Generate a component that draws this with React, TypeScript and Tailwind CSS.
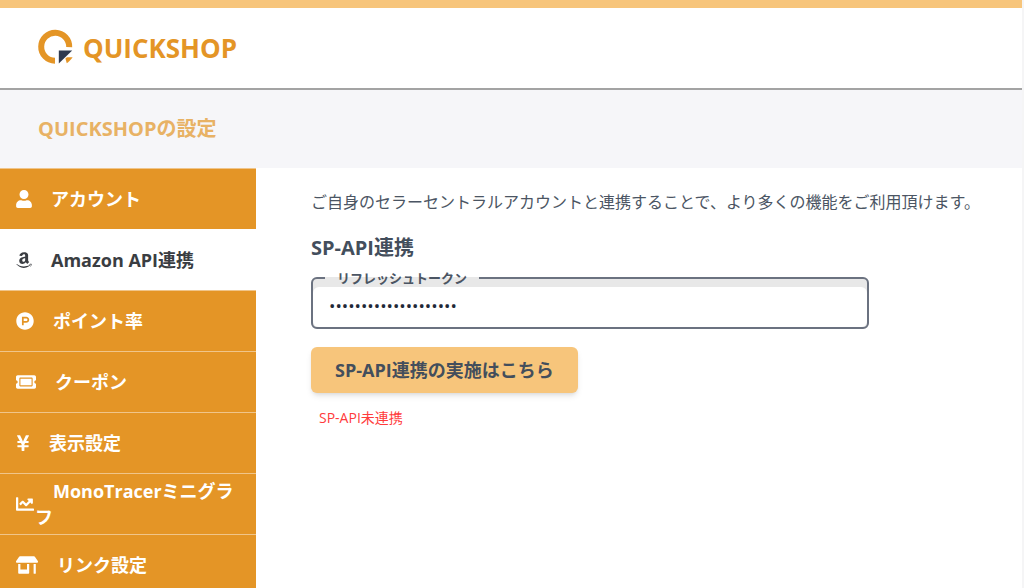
import React, { useState } from 'react';
import { FaUser, FaAmazon, FaProductHunt, FaTicketAlt, FaYenSign, FaChartLine, FaStoreAlt } from 'react-icons/fa';
import { IconType } from 'react-icons';

interface MenuItem {
    id: string;
    label: string;
    icon: IconType;
    width: string;
}

const menuItems: MenuItem[] = [
    { id: 'account', label: 'アカウント', icon: FaUser, width: 'w-4' },
    { id: 'amazon', label: 'Amazon API連携', icon: FaAmazon, width: 'w-4' },
    { id: 'point', label: 'ポイント率', icon: FaProductHunt, width: 'w-[18px]' },
    { id: 'coupon', label: 'クーポン', icon: FaTicketAlt, width: 'w-5' },
    { id: 'display', label: '表示設定', icon: FaYenSign, width: 'w-3.5' },
    { id: 'graph', label: 'MonoTracerミニグラフ', icon: FaChartLine, width: 'w-[18px]' },
    { id: 'link', label: 'リンク設定', icon: FaStoreAlt, width: 'w-[22px]' },
];

const Logo: React.FC = () => (
    <svg className="h-10 w-10" viewBox="0 0 40 40" aria-hidden="true">
        <path d="M19 32.8A14 14 0 1 1 33.2 19.2" fill="none" stroke="#e49526" strokeWidth="6" />
        <path d="M22.8 22.4H36.2L22.8 35.4Z" fill="#2f3a4f" />
        <path d="M29.4 30.6L31 29.2H36.6C35 31.6 33 33.8 30.8 35.2Z" fill="#e49526" />
    </svg>
);

const Sidebar: React.FC<{ active: string; onSelect: (id: string) => void }> = ({ active, onSelect }) => (
    <nav className="w-64 shrink-0">
        <ul>
            {menuItems.map(({ id, label, icon: Icon, width }) => (
                <li key={id}>
                    <button
                        type="button"
                        onClick={() => onSelect(id)}
                        className={`flex min-h-[61px] w-full items-center gap-px border-t px-4 text-left text-[18px] leading-[26px] font-bold ${
                            active === id ? 'border-white bg-white text-[#3a3d42]' : 'border-[#f0c58a] bg-[#e49526] text-white'
                        }`}
                    >
                        <Icon className={`h-[18px] shrink-0 ${width}`} />
                        <span>{'\u3000'}{label}</span>
                    </button>
                </li>
            ))}
        </ul>
    </nav>
);

const App: React.FC = () => {
    const [active, setActive] = useState('amazon');
    const [token, setToken] = useState('abcdefghij0123456789');

    return (
        <div className="h-screen overflow-hidden bg-[#f5f5f6] pr-0.5 font-['Open_Sans','Noto_Sans_CJK_JP',sans-serif]">
            <div className="flex h-full flex-col bg-white">
                <header className="flex h-[90px] shrink-0 items-center gap-[7px] border-t-8 border-b-2 border-t-[#f7c57b] border-b-[#a3a3a3] px-9">
                    <Logo />
                    <span className="text-[26px] font-bold text-[#e49526]">QUICKSHOP</span>
                </header>
                <div className="flex h-[78px] shrink-0 items-center bg-[#f6f6f9] px-[38px]">
                    <h1 className="text-xl font-bold text-[#e8b265]">QUICKSHOPの設定</h1>
                </div>
                <div className="flex">
                    <Sidebar active={active} onSelect={setActive} />
                    <main className="min-w-0 flex-1 px-[55px] pt-[22px] pr-6 text-[#4b5563]">
                        <p className="text-base">ご自身のセラーセントラルアカウントと連携することで、より多くの機能をご利用頂けます。</p>
                        <h2 className="mt-5 text-xl leading-7 font-bold text-[#434e5c]">SP-API連携</h2>
                        <fieldset className="mt-[7px] w-5/6 max-w-[558px] rounded-md border-2 border-[#6b7280] bg-[#e8e8e8]">
                            <legend className="ml-3 px-3 text-[13px] leading-[18px] font-bold text-[#4b5563]">
                                <label htmlFor="token">リフレッシュトークン</label>
                            </legend>
                            <input
                                id="token"
                                type="password"
                                value={token}
                                onChange={(e) => setToken(e.target.value)}
                                className="block h-10 w-full rounded-md bg-white px-4 pb-1 text-[17px] text-[#1f2937] outline-none"
                            />
                        </fieldset>
                        <button
                            type="button"
                            className="mt-[18px] h-[46px] rounded-md bg-[#f7c57b] px-6 text-[18px] font-bold text-[#434e5c] shadow-md"
                        >
                            SP-API連携の実施はこちら
                        </button>
                        <p className="mt-[15px] px-2 text-sm text-[#ff3b3b]">SP-API未連携</p>
                    </main>
                </div>
            </div>
        </div>
    );
};

export default App;
